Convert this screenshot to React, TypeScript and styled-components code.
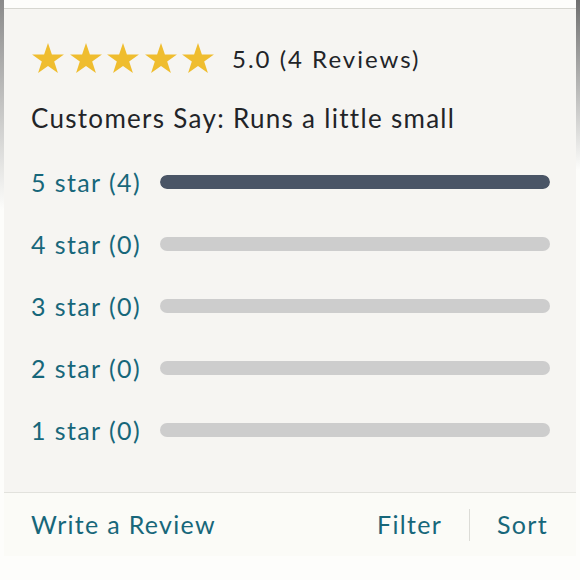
import styled, { createGlobalStyle } from 'styled-components'

const GlobalStyle = createGlobalStyle`
  html, body {
    margin: 0;
    padding: 0;
    background: #fdfdfb;
  }
  body {
    font-family: Lato, "Open Sans", sans-serif;
    -webkit-font-smoothing: antialiased;
  }
`;

const Page = styled.main`
  width: 580px;
  height: 580px;
  overflow: hidden;
  display: flex;
  flex-direction: column;
  padding: 0 4px;
  box-sizing: border-box;
  background:
    linear-gradient(to bottom, #8a8a8a, rgba(250, 250, 248, 0)) left top / 4px 210px no-repeat,
    linear-gradient(to bottom, #6f6f6f, rgba(250, 250, 248, 0)) right top / 4px 170px no-repeat,
    #fdfdfb;
`;

const TopStrip = styled.div`
  height: 8px;
  border-bottom: 1px solid #d6d6d0;
  background: #fdfdfb;
`;

const Summary = styled.section`
  background: #f6f5f2;
  padding: 31px 0 0 27px;
  display: flex;
  flex-direction: column;
  height: 483px;
  box-sizing: border-box;
`;

const RatingLine = styled.div`
  display: flex;
  align-items: center;
  gap: 17px;
  height: 36px;
`;

const Stars = styled.div`
  display: flex;
  gap: 3.5px;
`;

const StarIcon = () => (
  <svg width="34" height="33" viewBox="0 0 24 23">
    <path
      d="M12 0.6l2.75 8.06h8.5l-6.88 4.98 2.63 8.1L12 16.76l-7 4.98 2.63-8.1L0.75 8.66h8.5z"
      fill="#efbd2f"
    />
  </svg>
);

const Score = styled.span`
  font-size: 24px;
  color: #222428;
  letter-spacing: 2px;
`;

const Verdict = styled.p`
  margin: 27px 0 0;
  font-size: 26px;
  color: #222428;
  letter-spacing: 1.3px;
  line-height: 30px;
`;

const Breakdown = styled.div`
  display: flex;
  flex-direction: column;
  gap: 32px;
  margin-top: 34px;
`;

const Row = styled.div`
  display: flex;
  align-items: center;
  height: 30px;
`;

const RowLabel = styled.span`
  width: 129px;
  flex: none;
  font-size: 25px;
  color: #17677a;
  letter-spacing: 1.4px;
`;

const Track = styled.div`
  width: 390px;
  height: 14px;
  border-radius: 7px;
  background: #cdcdcd;
  overflow: hidden;
`;

const Fill = styled.div`
  height: 100%;
  border-radius: 7px;
  background: #4a5566;
`;

const Footer = styled.footer`
  background: #fbfbf7;
  border-top: 1px solid #e2e2dd;
  height: 64px;
  box-sizing: border-box;
  display: flex;
  align-items: center;
  padding: 0 28px 2px 27px;
`;

const Action = styled.a`
  font-size: 25px;
  color: #17677a;
  letter-spacing: 1.3px;
  text-decoration: none;
  cursor: pointer;
`;

const Spacer = styled.div`
  flex: 1;
`;

const Divider = styled.div`
  width: 1px;
  height: 32px;
  background: #dcdcd7;
  margin: 2px 27px 0;
`;

const ratings = [
  { stars: 5, count: 4 },
  { stars: 4, count: 0 },
  { stars: 3, count: 0 },
  { stars: 2, count: 0 },
  { stars: 1, count: 0 },
];

const total = 4;

export default function App() {
  return (
    <>
      <GlobalStyle />
      <Page>
        <TopStrip />
        <Summary>
          <RatingLine>
            <Stars>
              {[0, 1, 2, 3, 4].map((i) => (
                <StarIcon key={i} />
              ))}
            </Stars>
            <Score>5.0 (4 Reviews)</Score>
          </RatingLine>
          <Verdict>Customers Say: Runs a little small</Verdict>
          <Breakdown>
            {ratings.map((r) => (
              <Row key={r.stars}>
                <RowLabel>
                  {r.stars} star ({r.count})
                </RowLabel>
                <Track>
                  <Fill style={{ width: `${(r.count / total) * 100}%` }} />
                </Track>
              </Row>
            ))}
          </Breakdown>
        </Summary>
        <Footer>
          <Action>Write a Review</Action>
          <Spacer />
          <Action>Filter</Action>
          <Divider />
          <Action>Sort</Action>
        </Footer>
      </Page>
    </>
  )
}
